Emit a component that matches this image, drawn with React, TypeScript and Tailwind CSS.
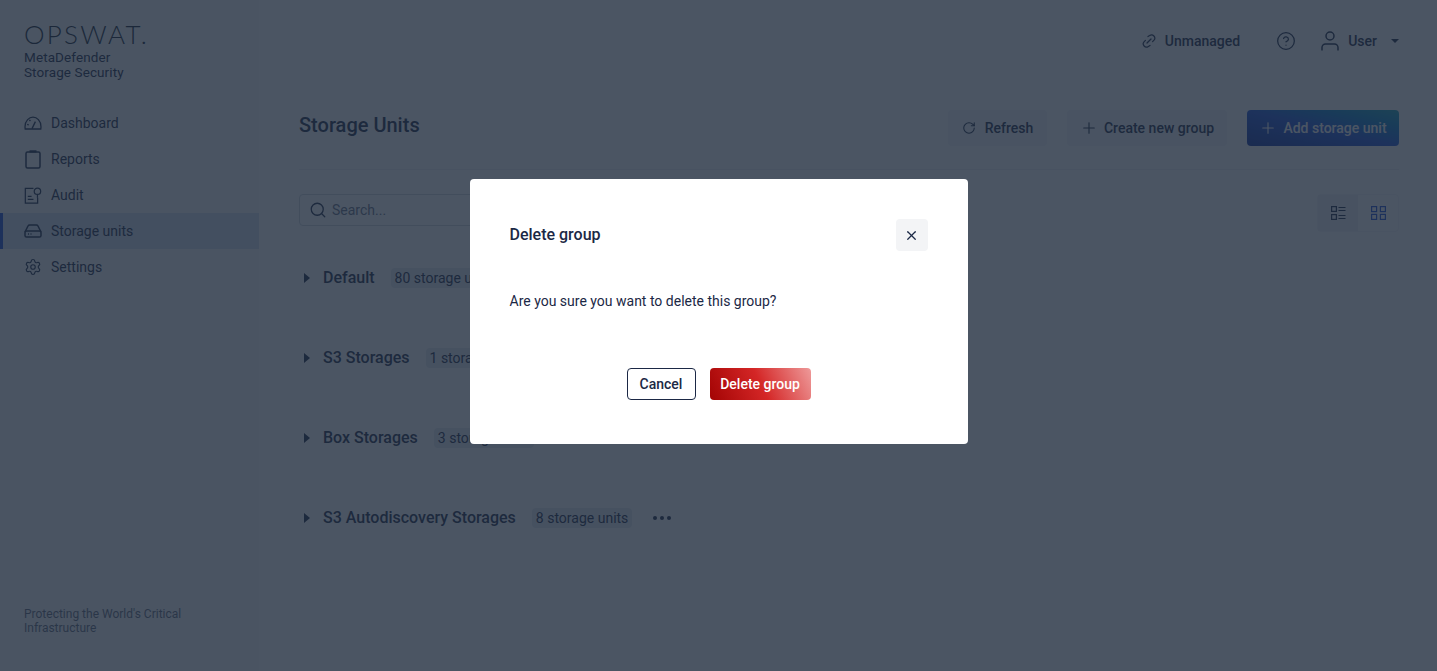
import { CircleHelp, Plus, RotateCw, Search, Settings, X } from "lucide-react";

const FONT = "font-['Roboto','Liberation_Sans',sans-serif]";

const GROUPS = [
  { name: "Default", count: "80 storage units" },
  { name: "S3 Storages", count: "1 storage unit" },
  { name: "Box Storages", count: "3 storage units" },
  { name: "S3 Autodiscovery Storages", count: "8 storage units" },
];

function GaugeIcon() {
  return (
    <svg width="18" height="14" viewBox="0 0 18 14" fill="none" stroke="currentColor" strokeWidth="1.3">
      <path d="M1.2 13 H16.8 C17.4 9 16.6 6 14.4 3.6 C11.4 0.4 6.6 0.4 3.6 3.6 C1.4 6 0.6 9 1.2 13 Z" />
      <path d="M8 12.6 L11.4 5.6 M3.2 8.4 L4.8 9 M5.4 3.8 L6.4 5" />
    </svg>
  );
}

function ClipboardIcon() {
  return (
    <svg width="16" height="19" viewBox="0 0 16 19" fill="none" stroke="currentColor" strokeWidth="1.5">
      <rect x="1" y="2" width="14" height="16" rx="1.5" />
      <path d="M4.5 1.4 H11.5" strokeWidth="2.2" />
    </svg>
  );
}

function AuditIcon() {
  return (
    <svg width="19" height="19" viewBox="0 0 19 19" fill="none" stroke="currentColor" strokeWidth="1.3">
      <path d="M10 2 H1.4 V17.6 H14.4 V12" />
      <path d="M4 10.5 H8 M4 13.5 H10" />
      <circle cx="14.2" cy="5" r="3.4" />
      <path d="M14.2 8.4 V12" />
    </svg>
  );
}

function DriveIcon() {
  return (
    <svg width="18" height="14" viewBox="0 0 18 14" fill="none" stroke="currentColor" strokeWidth="1.5">
      <path d="M1 8 L4 2 C4.4 1.3 5 1 5.6 1 H12.4 C13 1 13.6 1.3 14 2 L17 8" />
      <rect x="1" y="7" width="16" height="6" rx="1.6" />
      <path d="M4 10 H5 M6.5 10 H7.5" />
    </svg>
  );
}

function UnlinkIcon() {
  return (
    <svg width="14" height="14" viewBox="0 0 14 14" fill="none" stroke="currentColor" strokeWidth="1.2" strokeLinecap="round">
      <path d="M6 2.6 L7.6 1.6 C9 0.6 10.8 0.8 11.9 2 C13 3.2 13 5 12 6.2 L10.6 7.6" />
      <path d="M8 11.4 L6.4 12.4 C5 13.4 3.2 13.2 2.1 12 C1 10.8 1 9 2 7.8 L3.4 6.4" />
      <path d="M5 9 L9 5" />
    </svg>
  );
}

function UserIcon() {
  return (
    <svg width="18" height="20" viewBox="0 0 18 20" fill="none" stroke="currentColor" strokeWidth="1.5">
      <circle cx="9" cy="5" r="4" />
      <path d="M1 19.5 V16.5 C1 14.6 2.6 13 4.5 13 H13.5 C15.4 13 17 14.6 17 16.5 V19.5" />
    </svg>
  );
}

function ListViewIcon() {
  return (
    <svg width="15" height="14" viewBox="0 0 15 14" fill="none" stroke="currentColor" strokeWidth="1.2">
      <rect x="0.6" y="0.6" width="4.8" height="4.8" />
      <rect x="0.6" y="8.6" width="4.8" height="4.8" />
      <path d="M7.5 1.5 H14.5 M7.5 4.5 H14.5 M7.5 9.5 H14.5 M7.5 12.5 H14.5" />
    </svg>
  );
}

function GridViewIcon() {
  return (
    <svg width="15" height="14" viewBox="0 0 15 14" fill="none" stroke="currentColor" strokeWidth="1.2">
      <rect x="0.6" y="0.6" width="5" height="5" />
      <rect x="9.4" y="0.6" width="5" height="5" />
      <rect x="0.6" y="8.4" width="5" height="5" />
      <rect x="9.4" y="8.4" width="5" height="5" />
    </svg>
  );
}

const NAV = [
  { label: "Dashboard", icon: <GaugeIcon /> },
  { label: "Reports", icon: <ClipboardIcon /> },
  { label: "Audit", icon: <AuditIcon /> },
  { label: "Storage units", icon: <DriveIcon />, active: true },
  { label: "Settings", icon: <Settings size={20} strokeWidth={1.5} /> },
];

function Sidebar() {
  return (
    <aside className="w-[259px] h-full shrink-0 flex flex-col bg-[#f9fafb] text-[#1b2845]">
      <div className="pl-6 pt-[19px]">
        <div className="font-['Lato',sans-serif] font-light text-[26px] leading-[30px] tracking-[2.25px] text-[#141f33]">OPSWAT.</div>
        <div className="mt-px text-[13.5px] leading-[15px] tracking-[0.1px]">MetaDefender</div>
        <div className="text-[13.5px] leading-[15px] tracking-[0.1px]">Storage Security</div>
      </div>
      <nav className="mt-[25px] flex flex-col">
        {NAV.map((item) => (
          <div
            key={item.label}
            className={`h-9 flex items-center gap-[9px] text-sm ${item.active ? "bg-[#d4deee] border-l-[3px] border-[#1d4ed8] pl-[21px]" : "pl-6"}`}
          >
            <span className="w-[18px] flex justify-center">{item.icon}</span>
            <span>{item.label}</span>
          </div>
        ))}
      </nav>
      <div className="mt-auto pl-6 pb-[36px] text-xs leading-[14px] opacity-70 w-[190px]">
        Protecting the World's Critical Infrastructure
      </div>
    </aside>
  );
}

function GroupRow({ name, count, last }: { name: string; count: string; last: boolean }) {
  return (
    <div className="h-[80px] flex items-center">
      <span className="block ml-[5px] mr-[13px] w-0 h-0 border-y-[5px] border-y-transparent border-l-[6px] border-l-[#1b2845]" />
      <span className="text-base font-medium">{name}</span>
      <span className="ml-4 h-[20px] px-1 flex items-center rounded bg-[#e6eaf0] text-sm">{count}</span>
      {last && (
        <span className="ml-[21px] flex gap-[3px]">
          <i className="block w-1 h-1 rounded-full bg-[#1b2845]" />
          <i className="block w-1 h-1 rounded-full bg-[#1b2845]" />
          <i className="block w-1 h-1 rounded-full bg-[#1b2845]" />
        </span>
      )}
    </div>
  );
}

function Main() {
  return (
    <main className="flex-1 min-w-0 pl-10 pr-[38px] text-[#1b2845]">
      <header className="h-[82px] flex items-center justify-end text-sm font-medium">
        <span className="flex items-center gap-[9px]"><UnlinkIcon />Unmanaged</span>
        <CircleHelp size={20} strokeWidth={1.5} className="ml-9" />
        <span className="ml-[25px] flex items-center"><UserIcon /></span>
        <span className="ml-[9px]">User</span>
        <span className="ml-[14px] w-0 h-0 border-x-[4px] border-x-transparent border-t-[4px] border-t-[#1b2845]" />
      </header>
      <div className="mt-[28px] pb-[23px] flex items-start justify-between border-b border-[#eef0f4]">
        <h1 className="text-xl font-medium leading-[30px]">Storage Units</h1>
        <div className="flex gap-5 text-sm font-medium">
          <button className="h-9 w-[99px] rounded bg-[#f2f4f7] flex items-center justify-center gap-[9px]"><RotateCw size={14} strokeWidth={1.8} />Refresh</button>
          <button className="h-9 w-[160px] rounded bg-[#f2f4f7] flex items-center justify-center gap-[6px]"><Plus size={18} strokeWidth={1.5} />Create new group</button>
          <button className="h-9 w-[152px] rounded bg-gradient-to-tr from-[#0c2f9e] via-[#1a50d8] to-[#1aa0b8] text-white flex items-center justify-center gap-[6px]"><Plus size={18} strokeWidth={1.5} />Add storage unit</button>
        </div>
      </div>
      <div className="flex items-start justify-between mt-6">
        <div className="w-[300px] h-8 border border-[#d0d5dd] rounded-sm flex items-center pl-[9px] gap-[5px] text-sm text-[#667085]">
          <Search size={18} strokeWidth={1.7} className="text-[#1b2845]" />Search...
        </div>
        <div className="flex h-[38px] border border-[#f2f4f7] rounded-sm">
          <span className="w-10 flex items-center justify-center bg-[#eef0f4]"><ListViewIcon /></span>
          <span className="w-10 flex items-center justify-center text-[#1d4ed8]"><GridViewIcon /></span>
        </div>
      </div>
      <div className="mt-[6px]">
        {GROUPS.map((g, i) => (
          <GroupRow key={g.name} name={g.name} count={g.count} last={i === GROUPS.length - 1} />
        ))}
      </div>
    </main>
  );
}

function DeleteDialog() {
  return (
    <div className="fixed inset-0 bg-[#1e2b3c]/80 flex justify-center items-start pt-[179px]">
      <div className="w-[498px] h-[265px] bg-white rounded px-10 pt-10 text-[#1b2845] flex flex-col">
        <div className="flex items-center justify-between h-8">
          <h2 className="text-base font-medium">Delete group</h2>
          <button className="w-8 h-8 rounded bg-[#f3f4f6] flex items-center justify-center"><X size={15} strokeWidth={2} /></button>
        </div>
        <p className="mt-10 text-sm leading-5">Are you sure you want to delete this group?</p>
        <div className="mt-[57px] flex justify-center gap-[14px] text-sm font-medium">
          <button className="h-8 w-[69px] rounded border border-[#1b2845]">Cancel</button>
          <button className="h-8 w-[101px] rounded text-white bg-[linear-gradient(65deg,#a30404_0%,#d42626_50%,#ee9a9a_100%)]">Delete group</button>
        </div>
      </div>
    </div>
  );
}

export default function App() {
  return (
    <div className={`${FONT} h-screen flex bg-white overflow-hidden`}>
      <Sidebar />
      <Main />
      <DeleteDialog />
    </div>
  );
}
